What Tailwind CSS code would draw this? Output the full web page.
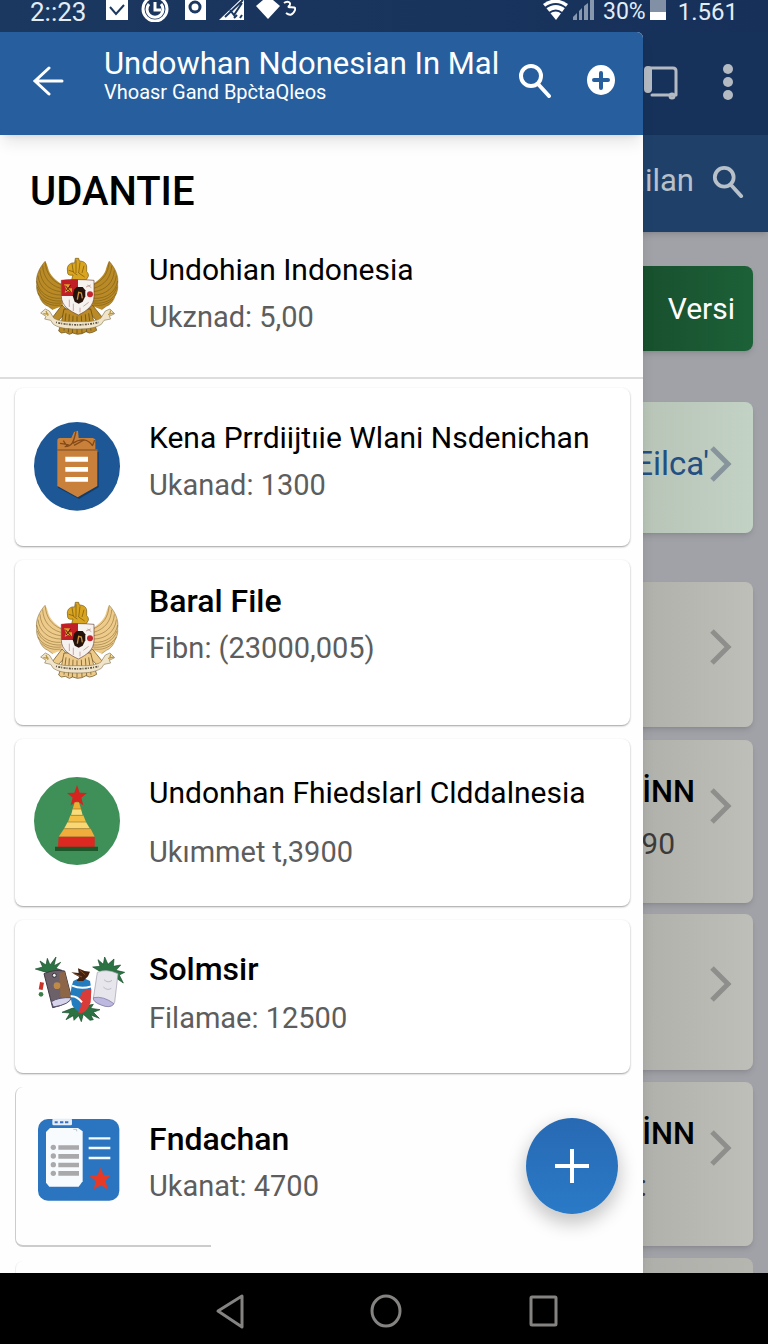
<!DOCTYPE html>
<html lang="id">
<head>
    <meta charset="UTF-8">
    <meta name="viewport" content="width=device-width, initial-scale=1.0">
    <title>Undowhan Ndonesian In Mal</title>
    <script src="https://cdn.jsdelivr.net/npm/@tailwindcss/browser@4"></script>
</head>
<body class="flex h-screen flex-col overflow-hidden bg-black font-[Roboto,'Noto_Sans',sans-serif] text-black">

    <!-- Shared drawings -->
    <svg class="hidden" aria-hidden="true">
        <symbol id="chevron" viewBox="0 0 24 36">
            <path d="M3 2l16 16L3 34" fill="none" stroke="currentColor" stroke-width="5"/>
        </symbol>
        <symbol id="search" viewBox="0 0 32 34">
            <circle cx="12" cy="12" r="10" fill="none" stroke="currentColor" stroke-width="4"/>
            <path d="M19 20l11 12" stroke="currentColor" stroke-width="4" stroke-linecap="round"/>
        </symbol>
        <symbol id="wing" viewBox="0 0 340 300" overflow="visible">
            <path d="M76 48C58 68 46 92 50 118c-2 14 3 28 8 36 4 14 14 26 26 30l14 10 30-12 4-62c-20-8-38-24-46-44-2-8-4-16-10-28z" fill="currentColor"/>
            <g fill="none" stroke="#5c430e" stroke-opacity=".6" stroke-width="2">
                <path d="M76 48C58 68 46 92 50 118c-2 14 3 28 8 36 4 14 14 26 26 30l14 10"/>
                <path d="M76 52c2 30 16 54 48 68M68 62c2 34 20 58 54 68M60 76c2 36 26 60 62 64M54 92c4 36 32 58 68 58M50 108c6 34 34 54 72 52M52 126c10 28 36 44 72 42M54 144c12 22 38 34 70 30M64 162c14 14 32 22 58 18"/>
            </g>
        </symbol>
        <symbol id="garuda" viewBox="42 36 258 264">
            <use href="#wing" width="340" height="300"/>
            <use href="#wing" width="340" height="300" transform="matrix(-1 0 0 1 343 0)"/>
            <path d="M126 180l-32 42 22 4 28-30zM217 180l34 42-22 4-28-30z" fill="currentColor" stroke="#5c430e" stroke-width="2"/>
            <path d="M132 192h80l10 40 8 24-12 6-10 2-10-4-12 6-14 2-14-4-10 4-12-6-12 2-8-6 8-26z" fill="currentColor" stroke="#5c430e" stroke-width="2"/>
            <path d="M138 205l-6 52M148 208l-3 54M159 212l-2 52M171 214v52M184 212l2 52M196 208l4 52M206 205l7 52" stroke="#5c430e" stroke-width="2"/>
            <path d="M142 72c0-12 10-20 22-18l2-14h10l2 8c12 0 22 6 22 18v14c4 4 6 8 5 14l-6 10h-44l4-14c-8 2-16 0-16-6z" fill="#d9a520" stroke="#72530c" stroke-width="2"/>
            <path d="M156 56l4 26 12 8M168 46v38M180 52l-4 32 18 12M192 62l-6 22M146 76l14 4" fill="none" stroke="#72530c" stroke-width="2"/>
            <path d="M124 106c32-3 66-3 98 0v48c0 28-22 44-47 56-26-12-51-28-51-56z" fill="#f6f2f0" stroke="#6d4536" stroke-width="2"/>
            <path d="M124 106c16-2 34-3 50-3v50h-50z" fill="#bf1f25"/>
            <path d="M132 118h18l-4 12h10v12l-12-4-10 6 4-12z" fill="#dda02a"/>
            <path d="M136 122l16 18M152 120l-14 18" stroke="#5a1010" stroke-width="3"/>
            <path d="M162 134l8-8h18l8 10v18l-8 16-12 6-12-6-6-18z" fill="#25120d"/>
            <path d="M172 164l4-22 8 2 3 16" fill="none" stroke="#c99034" stroke-width="4"/>
            <circle cx="210" cy="148" r="9" fill="#c3252c"/>
            <path d="M198 126l14-6M202 120l12 8M148 164v22M160 176v22M190 184l16-12M180 188v14" stroke="#b98078" stroke-width="2"/>
            <path d="M62 204l14-12 12 6 14 22c22 12 44 10 70 10s48 2 70-10l14-22 14-6 14 14-16 8 4 8-20 4-8 12c-24 14-48 14-72 14s-50 0-72-14l-8-12-18-4 4-8z" fill="#f0e5cb" stroke="#8c7a55" stroke-width="2"/>
            <path d="M108 232c42 10 86 10 128 0" fill="none" stroke="#5d5342" stroke-width="5" stroke-dasharray="3 4 6 3"/>
            <path d="M70 206l16 2M78 198l6 14M264 208l18-4M272 196l-4 16" stroke="#b99640" stroke-width="4"/>
        </symbol>
    </svg>

    <!-- Status bar -->
    <header class="flex h-8 shrink-0 items-start justify-between bg-linear-to-r from-[#1b3860] to-[#16305a] pr-[30px] pl-[30px] text-[23px] leading-6 text-[#e3edf6]">
        <div class="flex items-start gap-5">
            <span class="text-[26px]">2::23</span>
            <svg class="h-[22px] w-[190px]" viewBox="0 0 190 22" fill="#fff">
                <path d="M0 0h22v20H0z"/><path d="M4 7l6 7 8-9" fill="none" stroke="#1b3860" stroke-width="2"/>
                <circle cx="49" cy="9" r="12" fill="none" stroke="#fff" stroke-width="3"/>
                <path d="M43 4a8 8 0 1 0 12 0M49 2v8h6" fill="none" stroke="#fff" stroke-width="3"/>
                <path d="M79 0h21v20H79z"/><circle cx="89" cy="7" r="5" fill="none" stroke="#1b3860" stroke-width="3"/>
                <path d="M113 20L134 0h4v20z"/><path d="M119 17l18-17M124 10l4 5 8-12M128 18l3-3M134 18l2-3" fill="none" stroke="#1b3860" stroke-width="2"/>
                <path d="M150 6l7-6h10l7 6-12 13z"/>
                <path d="M178 3c4-3 8 0 5 3s8-1 6 4-5 6-9 3" fill="none" stroke="#fff" stroke-width="2"/>
            </svg>
        </div>
        <div class="flex items-start">
            <svg class="h-[22px] w-[52px]" viewBox="0 0 52 22">
                <path d="M0 4q12-9 25 0L13 20z" fill="#fff"/>
                <path d="M2 8q11-8 21 0M6 13q7-5 13 0" fill="none" stroke="#1a3561" stroke-width="2"/>
                <path d="M30 20v-3l4-4v7zM36 20v-9l3-3v12zM41 20V6l4-3v17zM47 20V0h4v20z" fill="#8797ae"/>
            </svg>
            <span class="ml-2">30%</span>
            <span class="ml-1 flex h-5 w-4 flex-col justify-end bg-[#8290a5]"><span class="h-2 bg-white"></span></span>
            <span class="ml-3 text-2xl leading-6">1.561</span>
        </div>
    </header>

    <div class="grid min-h-0 flex-1 grid-cols-1 grid-rows-[minmax(0,1fr)]">

        <!-- Page behind the drawer -->
        <main class="col-start-1 row-start-1 flex flex-col overflow-hidden bg-[#a1a2a8]">
            <div class="flex h-[103px] shrink-0 items-center justify-end gap-11 bg-[#17325a] pr-[34px] pb-1 text-[#b4bac2]">
                <button aria-label="Salin">
                    <svg class="h-9 w-9" viewBox="0 0 36 36" fill="none" stroke="currentColor" stroke-width="3">
                        <path d="M6 6v19" stroke-width="8" stroke-linecap="round"/><path d="M8 4h23q3 0 3 3v24M10 31h24" stroke-linecap="round"/><circle cx="30" cy="32" r="2"/>
                    </svg>
                </button>
                <button aria-label="Menu lainnya">
                    <svg class="h-9 w-3" viewBox="0 0 12 36" fill="currentColor"><circle cx="6" cy="5" r="5"/><circle cx="6" cy="18" r="5"/><circle cx="6" cy="31" r="5"/></svg>
                </button>
            </div>
            <div class="z-0 flex h-[97px] shrink-0 items-center justify-end gap-[18px] bg-[#1f4169] pr-6 pb-1 text-[#b8c0c9] shadow-md">
                <span class="text-[31px]">nilan</span>
                <button aria-label="Cari"><svg class="h-8 w-8"><use href="#search"/></svg></button>
            </div>

            <div class="flex flex-col pr-[15px] pl-4">
                <button class="mt-[34px] h-[85px] rounded-lg bg-linear-to-r from-[#174a2a] from-80% to-[#1c6138] pr-[18px] text-right text-[30px] text-white shadow-md">Versi</button>
                <a href="#" class="mt-[51px] flex h-[131px] items-center justify-end rounded-lg bg-linear-to-r from-[#b4c0b3] from-80% to-[#c2d2c4] pr-5 pb-2 text-[33px] text-[#234f83] shadow-md">
                    Eilca'<svg class="h-9 w-6 text-[#87949c]"><use href="#chevron"/></svg>
                </a>
                <a href="#" aria-label="Buka" class="mt-[49px] flex h-[145px] items-center justify-end rounded-lg bg-linear-to-r from-[#acaca8] from-80% to-[#bebfb8] pr-5 pb-4 text-[#8e8e8c] shadow-md">
                    <svg class="h-9 w-6"><use href="#chevron"/></svg>
                </a>
                <a href="#" class="mt-[13px] flex h-[163px] items-center justify-end gap-[14px] rounded-lg bg-linear-to-r from-[#acaca8] from-80% to-[#bebfb8] pr-5 pb-8 shadow-md">
                    <span class="flex flex-col pt-6 text-right leading-[52px]">
                        <span class="text-[31px] font-medium">TİNN</span>
                        <span class="pr-5 text-[30px] text-[#3b3a39]">90</span>
                    </span>
                    <svg class="h-9 w-6 text-[#8e8e8c]"><use href="#chevron"/></svg>
                </a>
                <a href="#" aria-label="Buka" class="mt-[11px] flex h-[156px] items-center justify-end rounded-lg bg-linear-to-r from-[#acaca8] from-80% to-[#bebfb8] pr-5 pb-4 text-[#8e8e8c] shadow-md">
                    <svg class="h-9 w-6"><use href="#chevron"/></svg>
                </a>
                <a href="#" class="mt-3 flex h-[164px] items-center justify-end gap-[14px] rounded-lg bg-linear-to-r from-[#acaca8] from-80% to-[#bebfb8] pr-5 pb-8 shadow-md">
                    <span class="flex flex-col pt-6 text-right leading-[52px]">
                        <span class="text-[31px] font-medium">TİNN</span>
                        <span class="pr-12 text-[30px] text-[#3b3a39]">:</span>
                    </span>
                    <svg class="h-9 w-6 text-[#8e8e8c]"><use href="#chevron"/></svg>
                </a>
                <div class="mt-3 h-[150px] shrink-0 rounded-lg bg-linear-to-r from-[#acaca8] from-80% to-[#b6b6b1]"></div>
            </div>
        </main>

        <!-- Drawer -->
        <aside class="relative z-10 col-start-1 row-start-1 mr-[125px] flex flex-col overflow-hidden rounded-tr-md bg-[#fefefe] shadow-lg">
            <div class="z-10 flex h-[103px] shrink-0 items-start bg-[#275f9e] pr-7 pl-8 text-white shadow-lg">
                <button aria-label="Kembali" class="mt-8">
                    <svg class="h-8 w-8" viewBox="0 0 32 32" fill="none" stroke="currentColor" stroke-width="3" stroke-linecap="round"><path d="M30 17H4M17 4L3 17l14 13"/></svg>
                </button>
                <div class="mt-4 ml-10 flex-1 whitespace-nowrap">
                    <h1 class="text-[31px] leading-8">Undowhan Ndonesian In Mal</h1>
                    <p class="text-xl leading-6">Vhoasr Gand Bpc̀taQleos</p>
                </div>
                <button aria-label="Cari" class="mt-8"><svg class="h-[34px] w-8"><use href="#search"/></svg></button>
                <button aria-label="Tambah" class="mt-[33px] ml-9">
                    <svg class="h-[30px] w-7" viewBox="0 0 28 30"><ellipse cx="14" cy="15" rx="14" ry="15" fill="#fff"/><path d="M14 8v15M7 15h14" stroke="#275f9e" stroke-width="4" stroke-linecap="round"/></svg>
                </button>
            </div>

            <section class="shrink-0 border-b-2 border-[#dddddf] pb-8">
                <h2 class="pt-[33px] pl-[30px] text-[40px] leading-[48px] font-medium">UDANTIE</h2>
                <div class="mt-[30px] flex items-start pl-[34px]">
                    <svg class="mt-[11px] h-[88px] w-[86px] text-[#b98a25]"><use href="#garuda"/></svg>
                    <div class="ml-[29px]">
                        <h3 class="text-[30px] leading-[48px]">Undohian Indonesia</h3>
                        <p class="text-[29px] leading-[46px] text-[#5d5d5d]">Ukznad: 5,00</p>
                    </div>
                </div>
            </section>

            <ul class="mt-[9px] flex flex-col gap-[14px] pr-[13px] pl-[15px] whitespace-nowrap">
                <li class="flex h-[158px] shrink-0 items-start rounded-lg bg-white pt-[26px] pl-[19px] shadow-[0_1px_2px_#00000060]">
                    <svg class="mt-2 h-[89px] w-[86px]" viewBox="0 0 258 267">
                        <ellipse cx="129" cy="133" rx="129" ry="133" fill="#1d5796"/>
                        <path d="M72 90h122v106l-59 35-63-34z" fill="#123c69"/>
                        <path d="M70 56q0-8 8-8h34l8-18 12-4 2 22h42l8 4v30h6v110l-59 34-61-34V82z" fill="#c8803a"/>
                        <path d="M70 84h120" stroke="#7d4a1c" stroke-width="3"/>
                        <path d="M92 74c28-2 28-24 34-46M116 64c24-16 46-14 60 8M78 64l26 4M88 56l12 18M120 70l30-16M176 70l6-16" fill="none" stroke="#844a18" stroke-width="4"/>
                        <path d="M94 104h68v15H94zM94 135h68v14H94zM94 165h68v14H94z" fill="#fff"/>
                    </svg>
                    <div class="ml-[29px]">
                        <h3 class="text-[30px] leading-[48px]">Kena Prrdiijtıie Wlani Nsdenichan</h3>
                        <p class="text-[29px] leading-[46px] text-[#5d5d5d]">Ukanad: 1300</p>
                    </div>
                </li>
                <li class="flex h-[165px] shrink-0 items-start rounded-lg bg-white pt-[17px] pl-[19px] shadow-[0_1px_2px_#00000060]">
                    <svg class="mt-6 h-[88px] w-[86px] text-[#eecb8b]"><use href="#garuda"/></svg>
                    <div class="ml-[29px]">
                        <h3 class="text-[32px] leading-[48px] font-medium">Baral File</h3>
                        <p class="text-[29px] leading-[46px] text-[#5d5d5d]">Fibn: (23000,005)</p>
                    </div>
                </li>
                <li class="flex h-[167px] shrink-0 items-start rounded-lg bg-white pt-[30px] pl-[19px] shadow-[0_1px_2px_#00000060]">
                    <svg class="mt-2 h-[88px] w-[86px]" viewBox="0 0 258 264">
                        <ellipse cx="129" cy="132" rx="129" ry="132" fill="#3f8f58"/>
                        <path d="M129 24l8 23 22 1-17 14 6 23-19-12-19 12 6-23-17-14 22-1z" fill="#d5231f"/>
                        <path d="M122 76h13l6 20h-25z" fill="#f0ae32"/>
                        <path d="M116 96h25l5 19h-35z" fill="#f9dc7c"/>
                        <path d="M109 115h39l8 20h-54z" fill="#f3bf45"/>
                        <path d="M101 135h55l12 20H90z" fill="#f9d873"/>
                        <path d="M90 155h80l12 24H74z" fill="#f0ad3b"/>
                        <path d="M116 96h25M109 115h39M101 135h55M90 155h80" stroke="#a87225" stroke-width="2"/>
                        <path d="M74 179h108v31H72z" fill="#db2820"/>
                        <path d="M63 209h129v13H63z" fill="#1c5629"/>
                    </svg>
                    <div class="ml-[29px]">
                        <h3 class="text-[30px] leading-[48px]">Undonhan Fhiedslarl Clddalnesia</h3>
                        <p class="mt-3 text-[29px] leading-[46px] text-[#5d5d5d]">Ukımmet t,3900</p>
                    </div>
                </li>
                <li class="flex h-[153px] shrink-0 items-start rounded-lg bg-white pt-[25px] pl-[19px] shadow-[0_1px_2px_#00000060]">
                    <svg class="mt-2 h-[73px] w-[92px]" viewBox="36 30 276 219">
                        <g fill="#2c7344" stroke="#174b2a" stroke-width="2">
                            <path d="M66 86L40 78l22-6-8-18 18 12 4-20 8 20 18-24-6 26 20-10-14 18 18 6-30 10z"/>
                            <path d="M232 84l-20-12 22-2-6-20 16 14 4-22 10 22 18-16-2 22 22-4-14 16 26 6-16 8 12 24-26-18z"/>
                            <path d="M150 196l-30 12 24 2-12 20 22-12 2 14 14-14 8 18 6-22 20 18 10-2-8-14 26 10-18-18 20-8-28-4 8-12z"/>
                        </g>
                        <path d="M66 92q30-14 62-8l20 78q-10 22-56 32z" fill="#6c6169" stroke="#423a45" stroke-width="3"/>
                        <path d="M112 90l16-4 20 78-32 12z" fill="#8d6647"/>
                        <path d="M88 176q22-14 60-12-4 20-54 28z" fill="#d7d5ec" stroke="#55516e" stroke-width="3"/>
                        <circle cx="105" cy="128" r="10" fill="#bf8a48"/><circle cx="97" cy="97" r="6" fill="#f2f2f2" stroke="#332c35" stroke-width="3"/>
                        <path d="M60 118l-4 22" stroke="#c93327" stroke-width="12"/><circle cx="57" cy="154" r="7" fill="#397f4a"/>
                        <path d="M226 88q26-12 62 4l-10 86q-6 18-34 10-30-8-30-22z" fill="#e6e6ec" stroke="#9d9bac" stroke-width="2"/>
                        <path d="M214 164q30-6 62 18-12 16-38 4-26-10-24-22z" fill="#bcb8df" stroke="#76729a" stroke-width="2"/>
                        <path d="M246 110q12 12 24 2M244 132q12 12 24 4" fill="none" stroke="#bcbcc8" stroke-width="3"/>
                        <path d="M154 114q24-16 50 0 12 60-18 92-18 8-36-20-10-40 4-72z" fill="#237cbe"/>
                        <path d="M208 138q-36 0-34 36 8 14-6 34 22 12 38-30z" fill="#d83b38"/>
                        <path d="M150 128q28 12 58 2M146 160q18-2 34 18" fill="none" stroke="#fff" stroke-width="6"/>
                        <path d="M164 114l8-12-24-14 22 2-2-14 20 8 16 2-6 14-14 14z" fill="#43200f"/>
                        <path d="M156 92l24 10M174 82l16 14" stroke="#84502e" stroke-width="3"/>
                    </svg>
                    <div class="ml-[23px]">
                        <h3 class="text-[32px] leading-[48px] font-medium">Solmsir</h3>
                        <p class="mt-[2px] text-[29px] leading-[46px] text-[#5d5d5d]">Filamae: 12500</p>
                    </div>
                </li>
                <li class="relative flex h-[160px] shrink-0 items-start pt-[28px] pl-[19px] before:absolute before:inset-y-0 before:left-0 before:w-[196px] before:rounded-l-lg before:border-b-2 before:border-l before:border-[#cccccc]">
                    <svg class="h-[88px] w-[86px]" viewBox="42 33 258 264">
                        <rect x="54" y="45" width="244" height="245" rx="30" fill="#2b74bf"/>
                        <path d="M90 72h84l14 10v150l-12 16H88l-10-12V84z" fill="#f8fbfd"/>
                        <rect x="97" y="44" width="59" height="20" rx="4" fill="#e4eef9"/>
                        <path d="M104 55h9M120 55h10M135 55h10" stroke="#3b6dc0" stroke-width="6"/>
                        <path d="M160 76h10v6" fill="none" stroke="#b9c3cb" stroke-width="3"/>
                        <g fill="#a9a9ab"><circle cx="100" cy="130" r="8"/><circle cx="100" cy="156" r="8"/><circle cx="100" cy="182" r="8"/><circle cx="100" cy="208" r="8"/><path d="M115 124h62v13h-62zM115 150h62v14h-62zM115 176h62v14h-62zM115 201h62v14h-62z"/></g>
                        <path d="M206 103h65M206 132h65M206 162h65" stroke="#f3faff" stroke-width="7"/>
                        <path d="M243 190l7 24 22-1-16 17 9 27-22-13-22 12 6-24-18-16 23-2z" fill="#e63a26"/>
                    </svg>
                    <div class="ml-[29px]">
                        <h3 class="text-[32px] leading-[48px] font-medium">Fndachan</h3>
                        <p class="text-[29px] leading-[46px] text-[#5d5d5d]">Ukanat: 4700</p>
                    </div>
                </li>
                <li class="h-[150px] shrink-0 rounded-lg border-l border-[#eeeeee]"></li>
            </ul>

            <button aria-label="Tambah data" class="absolute right-[25px] bottom-[59px] z-20 flex h-24 w-[92px] items-center justify-center rounded-[50%] bg-linear-to-b from-[#2869b3] to-[#2a7ac7] text-white shadow-[0_8px_18px_2px_#00000038]">
                <svg class="h-9 w-9" viewBox="0 0 36 36" stroke="currentColor" stroke-width="4"><path d="M18 1v34M1 18h34"/></svg>
            </button>
        </aside>
    </div>

    <!-- System navigation -->
    <nav class="z-20 flex h-[71px] shrink-0 items-center justify-center gap-[125px] bg-black pt-1 pl-1 text-[#858381]">
        <button aria-label="Kembali"><svg class="h-9 w-8" viewBox="0 0 32 36" fill="none" stroke="currentColor" stroke-width="3" stroke-linejoin="round"><path d="M29 3v31L5 18z"/></svg></button>
        <button aria-label="Beranda"><svg class="h-9 w-8" viewBox="0 0 32 36" fill="none" stroke="currentColor" stroke-width="3"><ellipse cx="16" cy="18" rx="14" ry="15"/></svg></button>
        <button aria-label="Aplikasi terbaru"><svg class="h-9 w-8" viewBox="0 0 32 36" fill="none" stroke="currentColor" stroke-width="3"><rect x="4" y="4" width="25" height="28" rx="1"/></svg></button>
    </nav>
</body>
</html>
